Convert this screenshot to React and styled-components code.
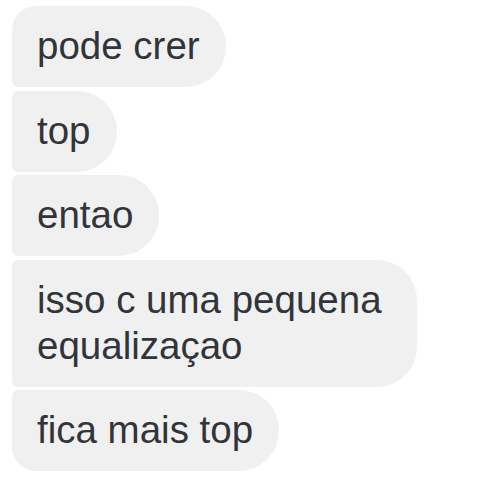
import React from "react";
import styled, { createGlobalStyle, css } from "styled-components";

const Global = createGlobalStyle`
  html, body { margin: 0; padding: 0; background: #ffffff; }
  body { font-family: "Liberation Sans", Arial, Helvetica, sans-serif; }
`;

const Thread = styled.div`
  display: flex;
  flex-direction: column;
  align-items: flex-start;
  gap: 3.5px;
  padding: 6px 12px;
`;

const Bubble = styled.div`
  box-sizing: border-box;
  max-width: 405px;
  padding: 17px 26px 18px 25px;
  background: #f0f0f0;
  color: #31353a;
  font-size: 38.5px;
  line-height: 46px;
  border-radius: 6px 40px 40px 6px;
  ${(p) => p.$first && css`border-top-left-radius: 24px;`}
  ${(p) => p.$last && css`border-bottom-left-radius: 24px;`}
`;

const messages = [
  "pode crer",
  "top",
  "entao",
  "isso c uma pequena equalizaçao",
  "fica mais top",
];

export default function App() {
  return (
    <>
      <Global />
      <Thread>
        {messages.map((m, i) => (
          <Bubble
            key={i}
            $first={i === 0}
            $last={i === messages.length - 1}
          >
            {m}
          </Bubble>
        ))}
      </Thread>
    </>
  );
}
